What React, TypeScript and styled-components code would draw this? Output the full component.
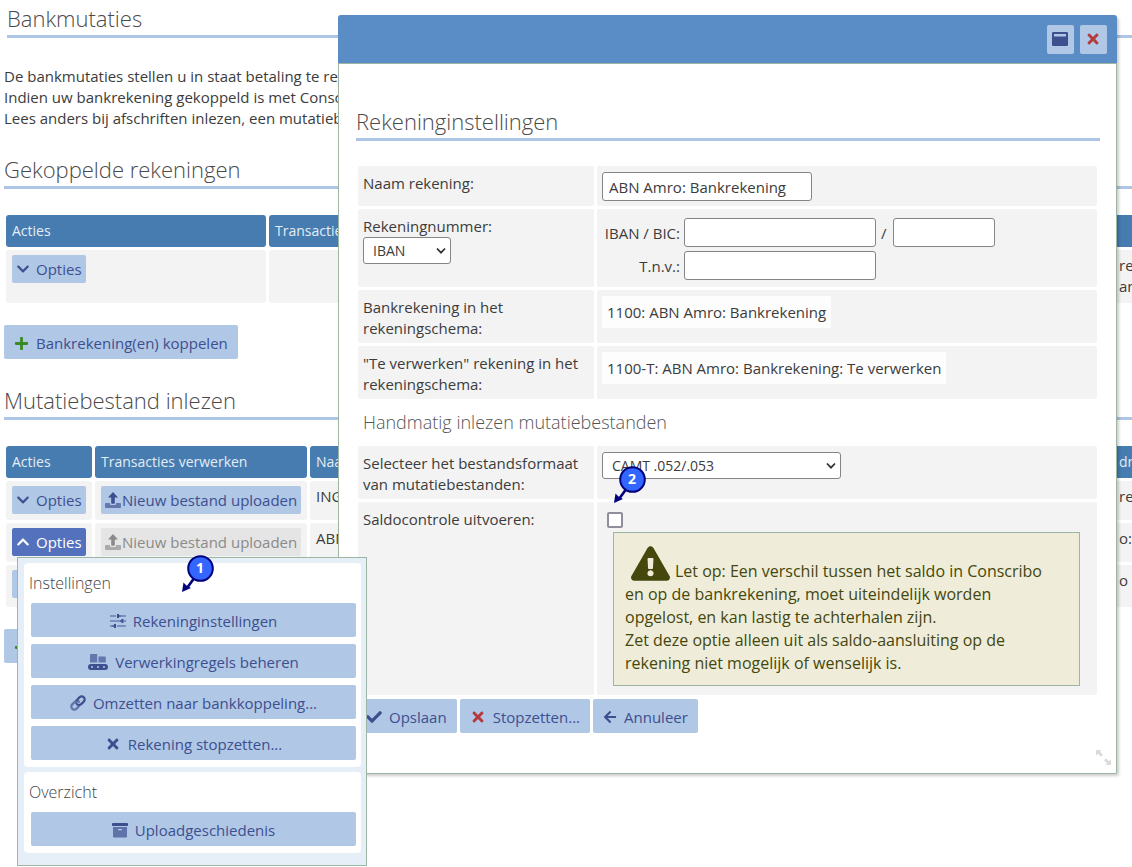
import React from "react";
import styled, { createGlobalStyle, css } from "styled-components";
import { FaArrowLeft, FaCheck, FaChevronDown, FaChevronUp, FaExclamationTriangle, FaPlus, FaTimes } from "react-icons/fa";

const c = {
  text: "#3c3c3c",
  title: "#4a4a4a",
  rule: "#aec6e5",
  button: "#b0c7e6",
  ink: "#3d4f8f",
  head: "#467cb0",
  cell: "#f3f3f3",
  frame: "#9db5a3",
};

const GlobalStyle = createGlobalStyle`
  *, *::before, *::after { box-sizing: border-box; }
  body {
    margin: 0;
    background: #fff;
    color: ${c.text};
    font: 15px/21px "Open Sans", "Noto Sans", sans-serif;
  }
  button, input, select { font: inherit; color: inherit; margin: 0; }
  h1, h2, h3, p { margin: 0; }
`;

const Page = styled.div`
  position: relative;
  min-height: 100vh;
  overflow-x: clip;
`;

const Main = styled.main`
  padding: 3px 0 0 4px;
`;

const Title = styled.h1<{ $inset?: boolean }>`
  margin-left: ${(p) => (p.$inset ? 3 : 0)}px;
  height: 35px;
  border-bottom: 3px solid ${c.rule};
  color: ${c.title};
  font-size: 22px;
  font-weight: 300;
  line-height: 30px;
  white-space: nowrap;
`;

const Intro = styled.p`
  padding: 28px 0 25px;
  white-space: nowrap;
`;

const Section = styled.section`
  padding-bottom: 26px;
`;

const DataTable = styled.table`
  width: calc(100% + 60px);
  margin: 23px 0 19px -1px;
  border-spacing: 3px;
  table-layout: fixed;

  th, td {
    padding: 0 6px;
    border-radius: 3px;
    text-align: left;
    vertical-align: top;
    white-space: nowrap;
  }
  th {
    height: 32px;
    background: ${c.head};
    color: #e4edf6;
    font-size: 14px;
    font-weight: 400;
    line-height: 32px;
  }
  td {
    padding-top: 5px;
    background: ${c.cell};
  }
`;

const Row = styled.tr<{ $height: number }>`
  height: ${(p) => p.$height}px;
`;

const buttonBase = css`
  display: inline-flex;
  align-items: center;
  border: 0;
  border-radius: 2px;
  background: ${c.button};
  color: ${c.ink};
  white-space: nowrap;
  svg { flex: none; }
`;

const SmallButton = styled.button<{ $tone?: "active" | "muted"; $tight?: boolean }>`
  ${buttonBase}
  height: 28px;
  gap: ${(p) => (p.$tight ? 1 : 6)}px;
  padding: 0 4px;
  ${(p) => p.$tone === "active" && css`background: #5371bd; color: #fff;`}
  ${(p) => p.$tone === "muted" && css`background: #e5e5e5; color: #8a8a8a;`}
`;

const Button = styled.button`
  ${buttonBase}
  height: 34px;
  gap: 7px;
  padding: 2px 10px 0;
`;

const MenuAnchor = styled.div`
  position: relative;
`;

const Menu = styled.div`
  position: absolute;
  z-index: 3;
  top: 29px;
  left: 5px;
  width: 350px;
  display: grid;
  gap: 5px;
  padding: 5px 5px 12px 6px;
  border: 1px solid ${c.frame};
  background: #e6eff7;
`;

const MenuGroup = styled.section`
  display: grid;
  gap: 7px;
  padding: 8px 5px 7px 7px;
  border-radius: 4px;
  background: #fff;
`;

const MenuTitle = styled.h3`
  margin-left: -2px;
  color: #444;
  font-size: 16px;
  font-weight: 300;
  line-height: 25px;
`;

const MenuButton = styled(Button)`
  justify-content: center;
`;

const Dialog = styled.div`
  position: absolute;
  z-index: 2;
  top: 15px;
  left: 338px;
  right: 15px;
  border: 1px solid ${c.frame};
  border-radius: 4px 4px 2px 2px;
  background: #fff;
  box-shadow: 2px 2px 3px rgba(0, 0, 0, 0.2);
`;

const DialogBar = styled.header`
  display: flex;
  justify-content: flex-end;
  gap: 6px;
  height: 49px;
  margin: -1px -1px 0;
  padding: 10px;
  border-bottom: 1px solid ${c.frame};
  border-radius: 3px 3px 0 0;
  background: #5a8dc5;
`;

const BarButton = styled.button<{ $danger?: boolean }>`
  ${buttonBase}
  justify-content: center;
  width: 27px;
  height: 29px;
  padding: 0 2px 1px 0;
  color: ${(p) => (p.$danger ? "#b53a3c" : c.ink)};
`;

const DialogBody = styled.form`
  padding: 42px 16px 40px 17px;
`;

const Fields = styled.div`
  display: grid;
  gap: 3px;
  margin: 25px 3px 4px 2px;
`;

const Field = styled.div`
  display: grid;
  grid-template-columns: 236px 1fr;
  gap: 3px;
`;

const LabelCell = styled.div`
  padding: 7px 5px 4px;
  border-radius: 2px;
  background: ${c.cell};
`;

const ValueCell = styled.div<{ $height: number }>`
  min-height: ${(p) => p.$height}px;
  padding: 6px 5px 5px;
  border-radius: 2px;
  background: ${c.cell};
`;

const Input = styled.input<{ $width: number }>`
  display: block;
  width: ${(p) => p.$width}px;
  height: 29px;
  padding: 0 6px;
  border: 1px solid #858585;
  border-radius: 3px;
  background: #fff;
`;

const SelectWrap = styled.div<{ $width: number }>`
  position: relative;
  width: ${(p) => p.$width}px;
  svg {
    position: absolute;
    right: 5px;
    top: 10px;
    pointer-events: none;
  }
`;

const SelectBox = styled.select`
  appearance: none;
  display: block;
  width: 100%;
  height: 27px;
  padding: 0 9px;
  border: 1px solid #858585;
  border-radius: 3px;
  background: #fff;
  font-size: 14px;
`;

const BankGrid = styled.div`
  display: grid;
  grid-template-columns: 82px 192px 17px 102px;
  row-gap: 4px;
  align-items: center;
  padding-top: 3px;
  label { padding: 2px 4px 0 0; text-align: right; white-space: nowrap; }
  span { padding: 2px 0 0 5px; }
`;

const Static = styled.output`
  display: inline-block;
  height: 32px;
  padding: 0 5px;
  background: #fdfdfd;
  line-height: 33px;
`;

const SubTitle = styled.h3`
  padding: 0 5px;
  color: #555;
  font-size: 18px;
  font-weight: 300;
  line-height: 41px;
`;

const Checkbox = styled.input`
  appearance: none;
  display: block;
  width: 16px;
  height: 16px;
  margin: 4px 5px;
  border: 2px solid #8d8d9b;
  border-radius: 2px;
  background: #fff;
`;

const Notice = styled.p`
  margin: 0 12px 2px 11px;
  padding: 11px 24px 10px 11px;
  border: 1px solid ${c.frame};
  background: #efedd9;
  color: #45470c;
  font-size: 16px;
  line-height: 23px;
  svg { margin: 0 5px 0 6px; vertical-align: -6px; }
`;

const Actions = styled.div`
  display: flex;
  gap: 3px;
`;

const Grip = styled.svg`
  position: absolute;
  right: 5px;
  bottom: 8px;
`;

const PinSvg = styled.svg<{ $x: number; $y: number }>`
  position: absolute;
  z-index: 4;
  left: ${(p) => p.$x}px;
  top: ${(p) => p.$y}px;
  pointer-events: none;
`;

function Pin({ x, y, n }: { x: number; y: number; n: number }) {
  return (
    <PinSvg $x={x} $y={y} width="34" height="40" viewBox="0 0 34 40">
      <path d="M14 23 L6 34" stroke="#00007d" strokeWidth="2.6" />
      <path d="M1 38 L2.5 28.5 L5.5 31.5 L10 34 Z" fill="#00007d" />
      <circle cx="19.5" cy="14.5" r="12.3" fill="#3366ff" stroke="#00007d" strokeWidth="2" />
      <text x="19" y="19" textAnchor="middle" fill="#fff" fontFamily="Open Sans, sans-serif" fontSize="14" fontWeight="700">{n}</text>
    </PinSvg>
  );
}

const UploadIcon = () => (
  <svg width="16" height="16" viewBox="0 0 16 16" fill="currentColor">
    <path opacity=".65" d="M1 11h4v1q0 1 1 1h4q1 0 1-1v-1h4q1 0 1 1v3q0 1-1 1H1q-1 0-1-1v-3q0-1 1-1z" />
    <path d="M8 0l5 5.4H9.8V11q0 .8-.8.8H7q-.8 0-.8-.8V5.4H3z" />
  </svg>
);

const SlidersIcon = () => (
  <svg width="16" height="14" viewBox="0 0 16 14" fill="currentColor">
    <path opacity=".6" d="M0 1.2h6v1.6H0zM10 1.2h6v1.6h-6zM0 6.2h10v1.6H0zM14 6.2h2v1.6h-2zM0 11.2h3v1.6H0zM7 11.2h9v1.6H7z" />
    <path d="M7 0h2v4H7zM9 1.2h1.5v1.6H9zM11.5 5h2v4h-2zM10 6.2h1.5v1.6H10zM4 10h2v4H4zM2.5 11.2H4v1.6H2.500z" />
  </svg>
);

const ConveyorIcon = () => (
  <svg width="20" height="16" viewBox="0 0 20 16" fill="currentColor">
    <path opacity=".65" d="M3 0h6.200v8.500H2V1q0-1 1-1zM10.500 2.500h6.500q.8 0 .8.8v5.200h-7.300z" />
    <path fillRule="evenodd" d="M3 10h14a3 3 0 010 6H3a3 3 0 010-6zm1 2a1 1 0 100 2 1 1 0 000-2zm6 0a1 1 0 100 2 1 1 0 000-2zm6 0a1 1 0 100 2 1 1 0 000-2z" />
  </svg>
);

const ChainIcon = () => (
  <svg width="16" height="16" viewBox="0 0 16 16" fill="none" strokeWidth="2.200" strokeLinecap="round">
    <path stroke="currentColor" opacity=".7" d="M9.300 10.700l-2.800 3a3 3 0 01-4.300-4.300l2.600-2.500a3 3 0 014.200 0" />
    <path stroke="currentColor" d="M6.700 5.300l2.800-3a3 3 0 014.300 4.300l-2.600 2.500a3 3 0 01-4.300 0 2.600 2.600 0 01-.5-.8" />
  </svg>
);

const ArchiveIcon = () => (
  <svg width="16" height="15" viewBox="0 0 16 15" fill="currentColor">
    <path d="M.8 0h14.400q.8 0 .8.800V3H0V.800Q0 0 .8 0z" />
    <path opacity=".7" fillRule="evenodd" d="M1 4h14v9.500q0 1-1 1H2q-1 0-1-1zm5 2v1.200h4V6z" />
  </svg>
);

const WindowIcon = () => (
  <svg width="16" height="14" viewBox="0 0 16 14" fill="currentColor">
    <path fillRule="evenodd" d="M1.200 0h13.600Q16 0 16 1.200v11.600q0 1.200-1.200 1.200H1.200Q0 14 0 12.800V1.200Q0 0 1.200 0zM2 2v2.500h12V2z" />
  </svg>
);

const Caret = () => (
  <svg width="10" height="8" viewBox="0 0 10 8" fill="none" stroke="#333" strokeWidth="1.800">
    <path d="M1 1.500l4 4.200 4-4.200" />
  </svg>
);

const OptionsButton = ({ open }: { open?: boolean }) => (
  <SmallButton type="button" $tone={open ? "active" : undefined} aria-expanded={!!open}>
    {open ? <FaChevronUp size={14} /> : <FaChevronDown size={14} />}
    Opties
  </SmallButton>
);

const UploadButton = ({ disabled }: { disabled?: boolean }) => (
  <SmallButton type="button" $tight $tone={disabled ? "muted" : undefined} disabled={disabled}>
    <UploadIcon />
    Nieuw bestand uploaden
  </SmallButton>
);

const AccountMenu = () => (
  <Menu>
    <MenuGroup>
      <MenuTitle>Instellingen</MenuTitle>
      <MenuButton type="button"><SlidersIcon />Rekeninginstellingen</MenuButton>
      <MenuButton type="button"><ConveyorIcon />Verwerkingregels beheren</MenuButton>
      <MenuButton type="button"><ChainIcon />Omzetten naar bankkoppeling...</MenuButton>
      <MenuButton type="button"><FaTimes size={16} />Rekening stopzetten...</MenuButton>
    </MenuGroup>
    <MenuGroup>
      <MenuTitle>Overzicht</MenuTitle>
      <MenuButton type="button"><ArchiveIcon />Uploadgeschiedenis</MenuButton>
    </MenuGroup>
  </Menu>
);

const SettingsDialog = () => (
  <Dialog role="dialog" aria-labelledby="dialog-title">
    <DialogBar>
      <BarButton type="button" aria-label="Maximaliseren"><WindowIcon /></BarButton>
      <BarButton type="button" aria-label="Sluiten" $danger><FaTimes size={16} /></BarButton>
    </DialogBar>
    <DialogBody>
      <Title as="h2" id="dialog-title">Rekeninginstellingen</Title>
      <Fields>
        <Field>
          <LabelCell><label htmlFor="name">Naam rekening:</label></LabelCell>
          <ValueCell $height={40}><Input id="name" $width={210} defaultValue="ABN Amro: Bankrekening" /></ValueCell>
        </Field>
        <Field>
          <LabelCell>
            <label htmlFor="kind">Rekeningnummer:</label>
            <SelectWrap $width={88}>
              <SelectBox id="kind"><option>IBAN</option></SelectBox>
              <Caret />
            </SelectWrap>
          </LabelCell>
          <ValueCell $height={78}>
            <BankGrid>
              <label htmlFor="iban">IBAN / BIC:</label>
              <Input id="iban" $width={192} />
              <span>/</span>
              <Input id="bic" aria-label="BIC" $width={102} />
              <label htmlFor="holder">T.n.v.:</label>
              <Input id="holder" $width={192} />
            </BankGrid>
          </ValueCell>
        </Field>
        <Field>
          <LabelCell>Bankrekening in het rekeningschema:</LabelCell>
          <ValueCell $height={53}><Static>1100: ABN Amro: Bankrekening</Static></ValueCell>
        </Field>
        <Field>
          <LabelCell>"Te verwerken" rekening in het rekeningschema:</LabelCell>
          <ValueCell $height={53}><Static>1100-T: ABN Amro: Bankrekening: Te verwerken</Static></ValueCell>
        </Field>
        <SubTitle>Handmatig inlezen mutatiebestanden</SubTitle>
        <Field>
          <LabelCell><label htmlFor="format">Selecteer het bestandsformaat van mutatiebestanden:</label></LabelCell>
          <ValueCell $height={53}>
            <SelectWrap $width={239}>
              <SelectBox id="format"><option>CAMT .052/.053</option></SelectBox>
              <Caret />
            </SelectWrap>
          </ValueCell>
        </Field>
        <Field>
          <LabelCell><label htmlFor="check">Saldocontrole uitvoeren:</label></LabelCell>
          <ValueCell $height={193}>
            <Checkbox id="check" type="checkbox" />
            <Notice>
              <FaExclamationTriangle size={39} />
              Let op: Een verschil tussen het saldo in Conscribo en op de bankrekening, moet uiteindelijk worden opgelost, en kan lastig te achterhalen zijn.
              <br />
              Zet deze optie alleen uit als saldo-aansluiting op de rekening niet mogelijk of wenselijk is.
            </Notice>
          </ValueCell>
        </Field>
      </Fields>
      <Actions>
        <Button type="button"><FaCheck size={16} />Opslaan</Button>
        <Button type="button"><FaTimes size={16} color="#b53a3c" />Stopzetten...</Button>
        <Button type="button"><FaArrowLeft size={14} />Annuleer</Button>
      </Actions>
    </DialogBody>
    <Grip width="15" height="15" viewBox="0 0 15 15" fill="#dadada">
      <path d="M0 0h5.500L4 1.800 7 4.800 5 6.800 2 3.800 0 5.500zM15 15H9.500l1.500-1.800-3-3 2-2 3 3 2-1.700z" />
    </Grip>
  </Dialog>
);

export default function App() {
  return (
    <Page>
      <GlobalStyle />
      <Main>
        <Title $inset>Bankmutaties</Title>
        <Intro>
          De bankmutaties stellen u in staat betaling te registreren.<br />
          Indien uw bankrekening gekoppeld is met Conscribo.<br />
          Lees anders bij afschriften inlezen, een mutatiebestand.
        </Intro>
        <Section>
          <Title as="h2">Gekoppelde rekeningen</Title>
          <DataTable>
            <colgroup><col width="260" /><col width="300" /><col /><col width="75" /></colgroup>
            <thead><tr><th>Acties</th><th>Transacties</th><th /><th /></tr></thead>
            <tbody>
              <Row $height={53}><td><OptionsButton /></td><td /><td /><td>re<br />an</td></Row>
            </tbody>
          </DataTable>
          <Button type="button"><FaPlus size={15} color="#3a8a24" />Bankrekening(en) koppelen</Button>
        </Section>
        <Section>
          <Title as="h2">Mutatiebestand inlezen</Title>
          <DataTable>
            <colgroup><col width="86" /><col width="212" /><col /><col width="75" /></colgroup>
            <thead><tr><th>Acties</th><th>Transacties verwerken</th><th>Naam</th><th>dres</th></tr></thead>
            <tbody>
              <Row $height={39}><td><OptionsButton /></td><td><UploadButton /></td><td>ING</td><td>re</td></Row>
              <Row $height={39}>
                <td><MenuAnchor><OptionsButton open /><AccountMenu /></MenuAnchor></td>
                <td><UploadButton disabled /></td><td>ABN</td><td>o:</td>
              </Row>
              <Row $height={42}><td><OptionsButton /></td><td><UploadButton /></td><td /><td>o S</td></Row>
            </tbody>
          </DataTable>
          <Button type="button"><FaPlus size={15} color="#3a8a24" />Bestand toevoegen</Button>
        </Section>
      </Main>
      <SettingsDialog />
      <Pin x={181} y={554} n={1} />
      <Pin x={613} y={465} n={2} />
    </Page>
  );
}
